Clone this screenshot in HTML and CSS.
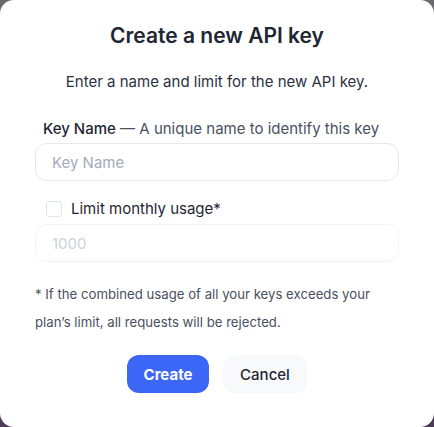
FILE: index.html
```html
<!DOCTYPE html>
<html>
<head>
<meta charset="utf-8">
<link rel="stylesheet" href="styles.css">
</head>
<body>
<div class="modal">
  <h1 class="title">Create a new API key</h1>
  <p class="subtitle">Enter a name and limit for the new API key.</p>
  <div class="field">
    <label class="label"><span class="label-main">Key Name</span> <span class="label-hint">— A unique name to identify this key</span></label>
    <div class="input"><span class="placeholder">Key Name</span></div>
  </div>
  <div class="check-row">
    <span class="checkbox"></span>
    <span class="check-label">Limit monthly usage*</span>
  </div>
  <div class="input input-disabled"><span class="placeholder placeholder-disabled">1000</span></div>
  <p class="note">* If the combined usage of all your keys exceeds your plan’s limit, all requests will be rejected.</p>
  <div class="actions">
    <button class="btn btn-primary">Create</button>
    <button class="btn btn-secondary">Cancel</button>
  </div>
</div>
</body>
</html>
```
FILE: styles.css
```css
html, body {
  margin: 0;
  padding: 0;
}
body {
  width: 434px;
  height: 427px;
  background: linear-gradient(180deg, #6b6b6e 0%, #4b3d55 100%);
  font-family: Inter, "Noto Sans", sans-serif;
  overflow: hidden;
}
.modal {
  box-sizing: border-box;
  width: 434px;
  height: 427px;
  background: #ffffff;
  border-radius: 14px;
  padding: 22px 35px 0 35px;
  display: flex;
  flex-direction: column;
}
.title {
  margin: 0;
  text-align: center;
  font-size: 21px;
  font-weight: 600;
  color: #1f2633;
  line-height: 28px;
}
.subtitle {
  margin: 21px 0 0 0;
  text-align: center;
  font-size: 15px;
  color: #2b3140;
  line-height: 22px;
}
.field {
  margin-top: 25px;
  display: flex;
  flex-direction: column;
}
.label {
  font-size: 15px;
  line-height: 22px;
  padding-left: 8px;
}
.label-main {
  color: #1f2633;
  font-weight: 500;
}
.label-hint {
  color: #4a5160;
}
.input {
  box-sizing: border-box;
  margin-top: 3px;
  height: 38px;
  border: 1px solid #e3e8ef;
  border-radius: 12px;
  display: flex;
  align-items: center;
  padding-left: 16px;
}
.input-disabled {
  margin-top: 4px;
  border-color: #f1f3f6;
}
.placeholder {
  font-size: 15px;
  color: #a3acba;
}
.placeholder-disabled {
  color: #cdd2da;
}
.check-row {
  margin-top: 17px;
  display: flex;
  align-items: center;
  padding-left: 11px;
  gap: 9px;
}
.checkbox {
  box-sizing: border-box;
  width: 16px;
  height: 16px;
  border: 1px solid #e0e5ec;
  border-radius: 3px;
}
.check-label {
  font-size: 15px;
  color: #1f2633;
  line-height: 22px;
}
.note {
  margin: 18px 0 0 0;
  font-size: 13.2px;
  line-height: 28px;
  color: #4a5060;
}
.actions {
  margin-top: 19px;
  display: flex;
  justify-content: center;
  gap: 14px;
}
.btn {
  height: 38px;
  border: none;
  border-radius: 12px;
  font-family: Inter, "Noto Sans", sans-serif;
  font-size: 15px;
  padding: 0;
  width: 82px;
}
.btn-primary {
  background: #3c66f6;
  color: #ffffff;
  font-weight: 700;
}
.btn-secondary {
  width: 84px;
  background: #f8f9fb;
  color: #1f2633;
  font-weight: 500;
}
```
